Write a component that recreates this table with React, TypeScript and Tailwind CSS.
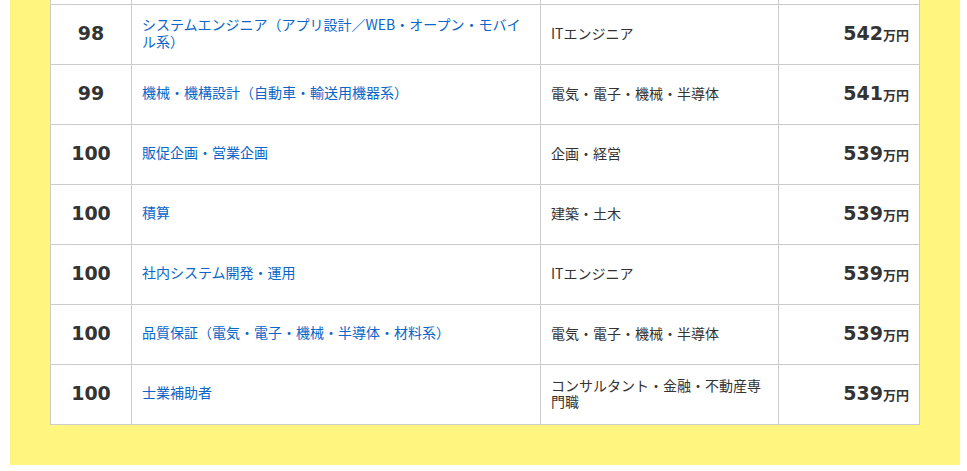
type Row = {
  rank: number;
  job: string;
  category: string;
  salary: number;
};

const rows: Row[] = [
  { rank: 98, job: "システムエンジニア（アプリ設計／WEB・オープン・モバイル系）", category: "ITエンジニア", salary: 542 },
  { rank: 99, job: "機械・機構設計（自動車・輸送用機器系）", category: "電気・電子・機械・半導体", salary: 541 },
  { rank: 100, job: "販促企画・営業企画", category: "企画・経営", salary: 539 },
  { rank: 100, job: "積算", category: "建築・土木", salary: 539 },
  { rank: 100, job: "社内システム開発・運用", category: "ITエンジニア", salary: 539 },
  { rank: 100, job: "品質保証（電気・電子・機械・半導体・材料系）", category: "電気・電子・機械・半導体", salary: 539 },
  { rank: 100, job: "士業補助者", category: "コンサルタント・金融・不動産専門職", salary: 539 },
];

const numFont = { fontFamily: '"DejaVu Sans", "Noto Sans CJK JP", sans-serif' };

function RankingRow({ row }: { row: Row }) {
  return (
    <div className="flex h-[60px] border-b border-[#cccccc]">
      <div
        className="flex w-[81px] shrink-0 items-center justify-center border-r border-[#cccccc] pb-[3px] text-[19px] font-bold text-[#333333]"
        style={numFont}
      >
        {row.rank}
      </div>
      <div className="flex w-[409px] shrink-0 items-center border-r border-[#cccccc] px-[10px] pb-[4px]">
        <a href="#" className="text-[14px] leading-[17px] text-[#0a66c8]">
          {row.job}
        </a>
      </div>
      <div className="flex w-[238px] shrink-0 items-center border-r border-[#cccccc] px-[10px] pb-[4px] text-[14px] leading-[16px] text-[#333333]">
        {row.category}
      </div>
      <div
        className="flex w-[140px] shrink-0 items-baseline justify-end px-[10px] pt-[17px] font-bold text-[#333333]"
        style={numFont}
      >
        <span className="text-[19px] leading-[22px]">{row.salary}</span>
        <span className="text-[13px] leading-[22px]" style={{ fontFamily: '"Noto Sans CJK JP", sans-serif' }}>
          万円
        </span>
      </div>
    </div>
  );
}

export default function App() {
  return (
    <div
      className="min-h-[471px] bg-white"
      style={{ fontFamily: '"Noto Sans CJK JP", "Noto Sans", sans-serif' }}
    >
      <div className="ml-[10px] w-[950px] bg-[#fff57f] px-[40px] pb-[40px]">
        <div className="w-[870px] border-x border-[#cccccc] bg-white">
          <div className="flex h-[5px] border-b border-[#cccccc]">
            <div className="w-[81px] shrink-0 border-r border-[#cccccc]" />
            <div className="w-[409px] shrink-0 border-r border-[#cccccc]" />
            <div className="w-[238px] shrink-0 border-r border-[#cccccc]" />
            <div className="w-[140px] shrink-0" />
          </div>
          {rows.map((row, i) => (
            <RankingRow key={i} row={row} />
          ))}
        </div>
      </div>
    </div>
  );
}
